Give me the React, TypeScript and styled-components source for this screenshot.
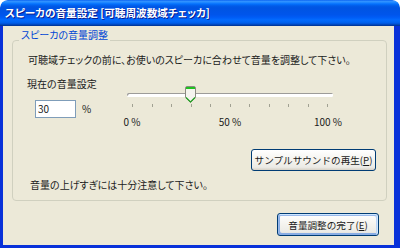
import React from 'react';
import styled, { createGlobalStyle } from 'styled-components';

const Global = createGlobalStyle`
  html, body { margin: 0; padding: 0; background: #ffffff; }
  body {
    width: 400px; height: 248px; overflow: hidden;
    font-family: "Noto Sans CJK JP", "Noto Sans", sans-serif;
    font-feature-settings: "palt";
  }
`;

const Window = styled.div`
  width: 400px;
  height: 248px;
  display: flex;
  flex-direction: column;
  border-radius: 8px 8px 0 0;
  overflow: hidden;
`;

const TitleBar = styled.div`
  flex: none;
  height: 26px;
  display: flex;
  align-items: center;
  padding-left: 5px;
  border-radius: 7px 7px 0 0;
  background: linear-gradient(180deg, #0058ee 0%, #3593ff 4%, #288eff 8%, #127dff 12%, #036ffc 16%, #0262ee 20%, #0057e5 26%, #0054e3 32%, #0055eb 56%, #005bf5 66%, #026afe 76%, #0062ef 86%, #0052d6 92%, #0040ab 96%, #003092 100%);
`;

const Title = styled.span`
  color: #ffffff;
  font-weight: bold;
  font-size: 10.6px;
  line-height: 12px;
  text-shadow: 1px 1px #0b1b8c;
`;

const Frame = styled.div`
  flex: 1;
  display: flex;
  flex-direction: column;
  background: #ece9d8;
  border-left: 3px solid #0831d9;
  border-right: 6px solid #0831d9;
  border-bottom: 3px solid #0831d9;
  padding: 3px 7px 0 9px;
  font-size: 10px;
  line-height: 12px;
  color: #1a1a1a;
`;

const Group = styled.fieldset`
  margin: 0;
  min-width: 0;
  padding: 0 0 9px 0;
  border: 1px solid #d0d0bf;
  border-radius: 4px;
  display: flex;
  flex-direction: column;
`;

const Legend = styled.legend`
  margin-left: 6px;
  padding: 0 2px 10px;
  color: #0046d5;
  font-size: 10px;
  line-height: 12px;
`;

const Text = styled.div<{ $indent: number; $top: number }>`
  margin-left: ${p => p.$indent}px;
  margin-top: ${p => p.$top}px;
  white-space: nowrap;
`;

const Controls = styled.div`
  display: flex;
  margin-top: 12px;
  padding-left: 14px;
`;

const LeftCol = styled.div`
  width: 100px;
  display: flex;
  flex-direction: column;
`;

const InputRow = styled.div`
  display: flex;
  align-items: center;
  gap: 6px;
  margin-top: 10px;
  margin-left: 8px;
`;

const NumberBox = styled.div`
  box-sizing: border-box;
  width: 41px;
  height: 18px;
  border: 1px solid #7f9db9;
  background: #ffffff;
  padding-left: 2px;
  display: flex;
  align-items: center;
`;

const SliderBox = styled.div`
  position: relative;
  width: 206px;
  margin-top: 8px;
`;

const Track = styled.div`
  margin-top: 7px;
  height: 3px;
  border-radius: 2px;
  background: #ffffff;
  box-shadow: inset 1px 1px #9d9c99, 0 1px #ffffff;
`;

const Thumb = styled.svg`
  position: absolute;
  top: 0;
  display: block;
`;

const Ticks = styled.div`
  margin-top: 8px;
  padding: 0 5px;
  height: 3px;
  display: flex;
  justify-content: space-between;
`;

const Tick = styled.span`
  width: 1px;
  height: 3px;
  background: #a1a192;
`;

const TickLabels = styled.div`
  margin: 9px -15px 0;
  display: flex;
  justify-content: space-between;
`;

const TickLabel = styled.span`
  width: 40px;
  text-align: center;
`;

const ButtonRow = styled.div<{ $top: number; $right: number }>`
  display: flex;
  justify-content: flex-end;
  margin-top: ${p => p.$top}px;
  padding-right: ${p => p.$right}px;
`;

const Button = styled.button<{ $w: number; $h: number; $default?: boolean }>`
  box-sizing: border-box;
  width: ${p => p.$w}px;
  height: ${p => p.$h}px;
  padding: 0;
  border: 1px solid #003c74;
  border-radius: 3px;
  font-family: inherit;
  font-size: 9.6px;
  line-height: 12px;
  color: #1a1a1a;
  background: linear-gradient(180deg, #ffffff 0%, #f4f3ee 50%, #ecebe6 86%, #d6d0c5 100%);
  box-shadow: ${p =>
    p.$default
      ? 'inset -1px 1px #cee7ff, inset 1px 2px #98b8ea, inset -2px 2px #bcd4f6, inset 1px -1px #89ade4, inset 2px -2px #89ade4'
      : 'none'};
`;

const Key = styled.span`
  text-decoration: underline;
`;

const ticks = Array.from({ length: 11 }, (_, i) => i);

export default function App() {
  const value = 30;
  const thumbLeft = 5 + (value / 100) * 196 - 5.5;
  return (
    <>
      <Global />
      <Window>
        <TitleBar>
          <Title>スピーカの音量設定 [可聴周波数域チェッカ]</Title>
        </TitleBar>
        <Frame>
          <Group>
            <Legend>スピーカの音量調整</Legend>
            <Text $indent={15} $top={3}>
              可聴域チェックの前に、お使いのスピーカに合わせて音量を調整して下さい。
            </Text>
            <Controls>
              <LeftCol>
                <span>現在の音量設定</span>
                <InputRow>
                  <NumberBox>{value}</NumberBox>
                  <span>%</span>
                </InputRow>
              </LeftCol>
              <SliderBox>
                <Track />
                <Thumb width="11" height="17" viewBox="0 0 11 17" style={{ left: thumbLeft }}>
                  <path d="M0.5 2 Q0.5 0.5 2 0.5 H9 Q10.5 0.5 10.5 2 V11.5 L5.5 16.5 L0.5 11.5 Z" fill="#f5f4ee" stroke="#8a8a80" />
                  <rect x="1" y="1" width="9" height="2" fill="#21c121" />
                  <path d="M1 11.5 L5.5 16 L10 11.5" fill="none" stroke="#21a121" strokeWidth="1.2" />
                </Thumb>
                <Ticks>
                  {ticks.map(t => (
                    <Tick key={t} />
                  ))}
                </Ticks>
                <TickLabels>
                  <TickLabel>0 %</TickLabel>
                  <TickLabel>50 %</TickLabel>
                  <TickLabel>100 %</TickLabel>
                </TickLabels>
              </SliderBox>
            </Controls>
            <ButtonRow $top={21} $right={10}>
              <Button $w={125} $h={22}>
                サンプルサウンドの再生(<Key>P</Key>)
              </Button>
            </ButtonRow>
            <Text $indent={17} $top={8}>
              音量の上げすぎには十分注意して下さい。
            </Text>
          </Group>
          <ButtonRow $top={12} $right={8}>
            <Button $w={102} $h={23} $default>
              音量調整の完了(<Key>E</Key>)
            </Button>
          </ButtonRow>
        </Frame>
      </Window>
    </>
  );
}
